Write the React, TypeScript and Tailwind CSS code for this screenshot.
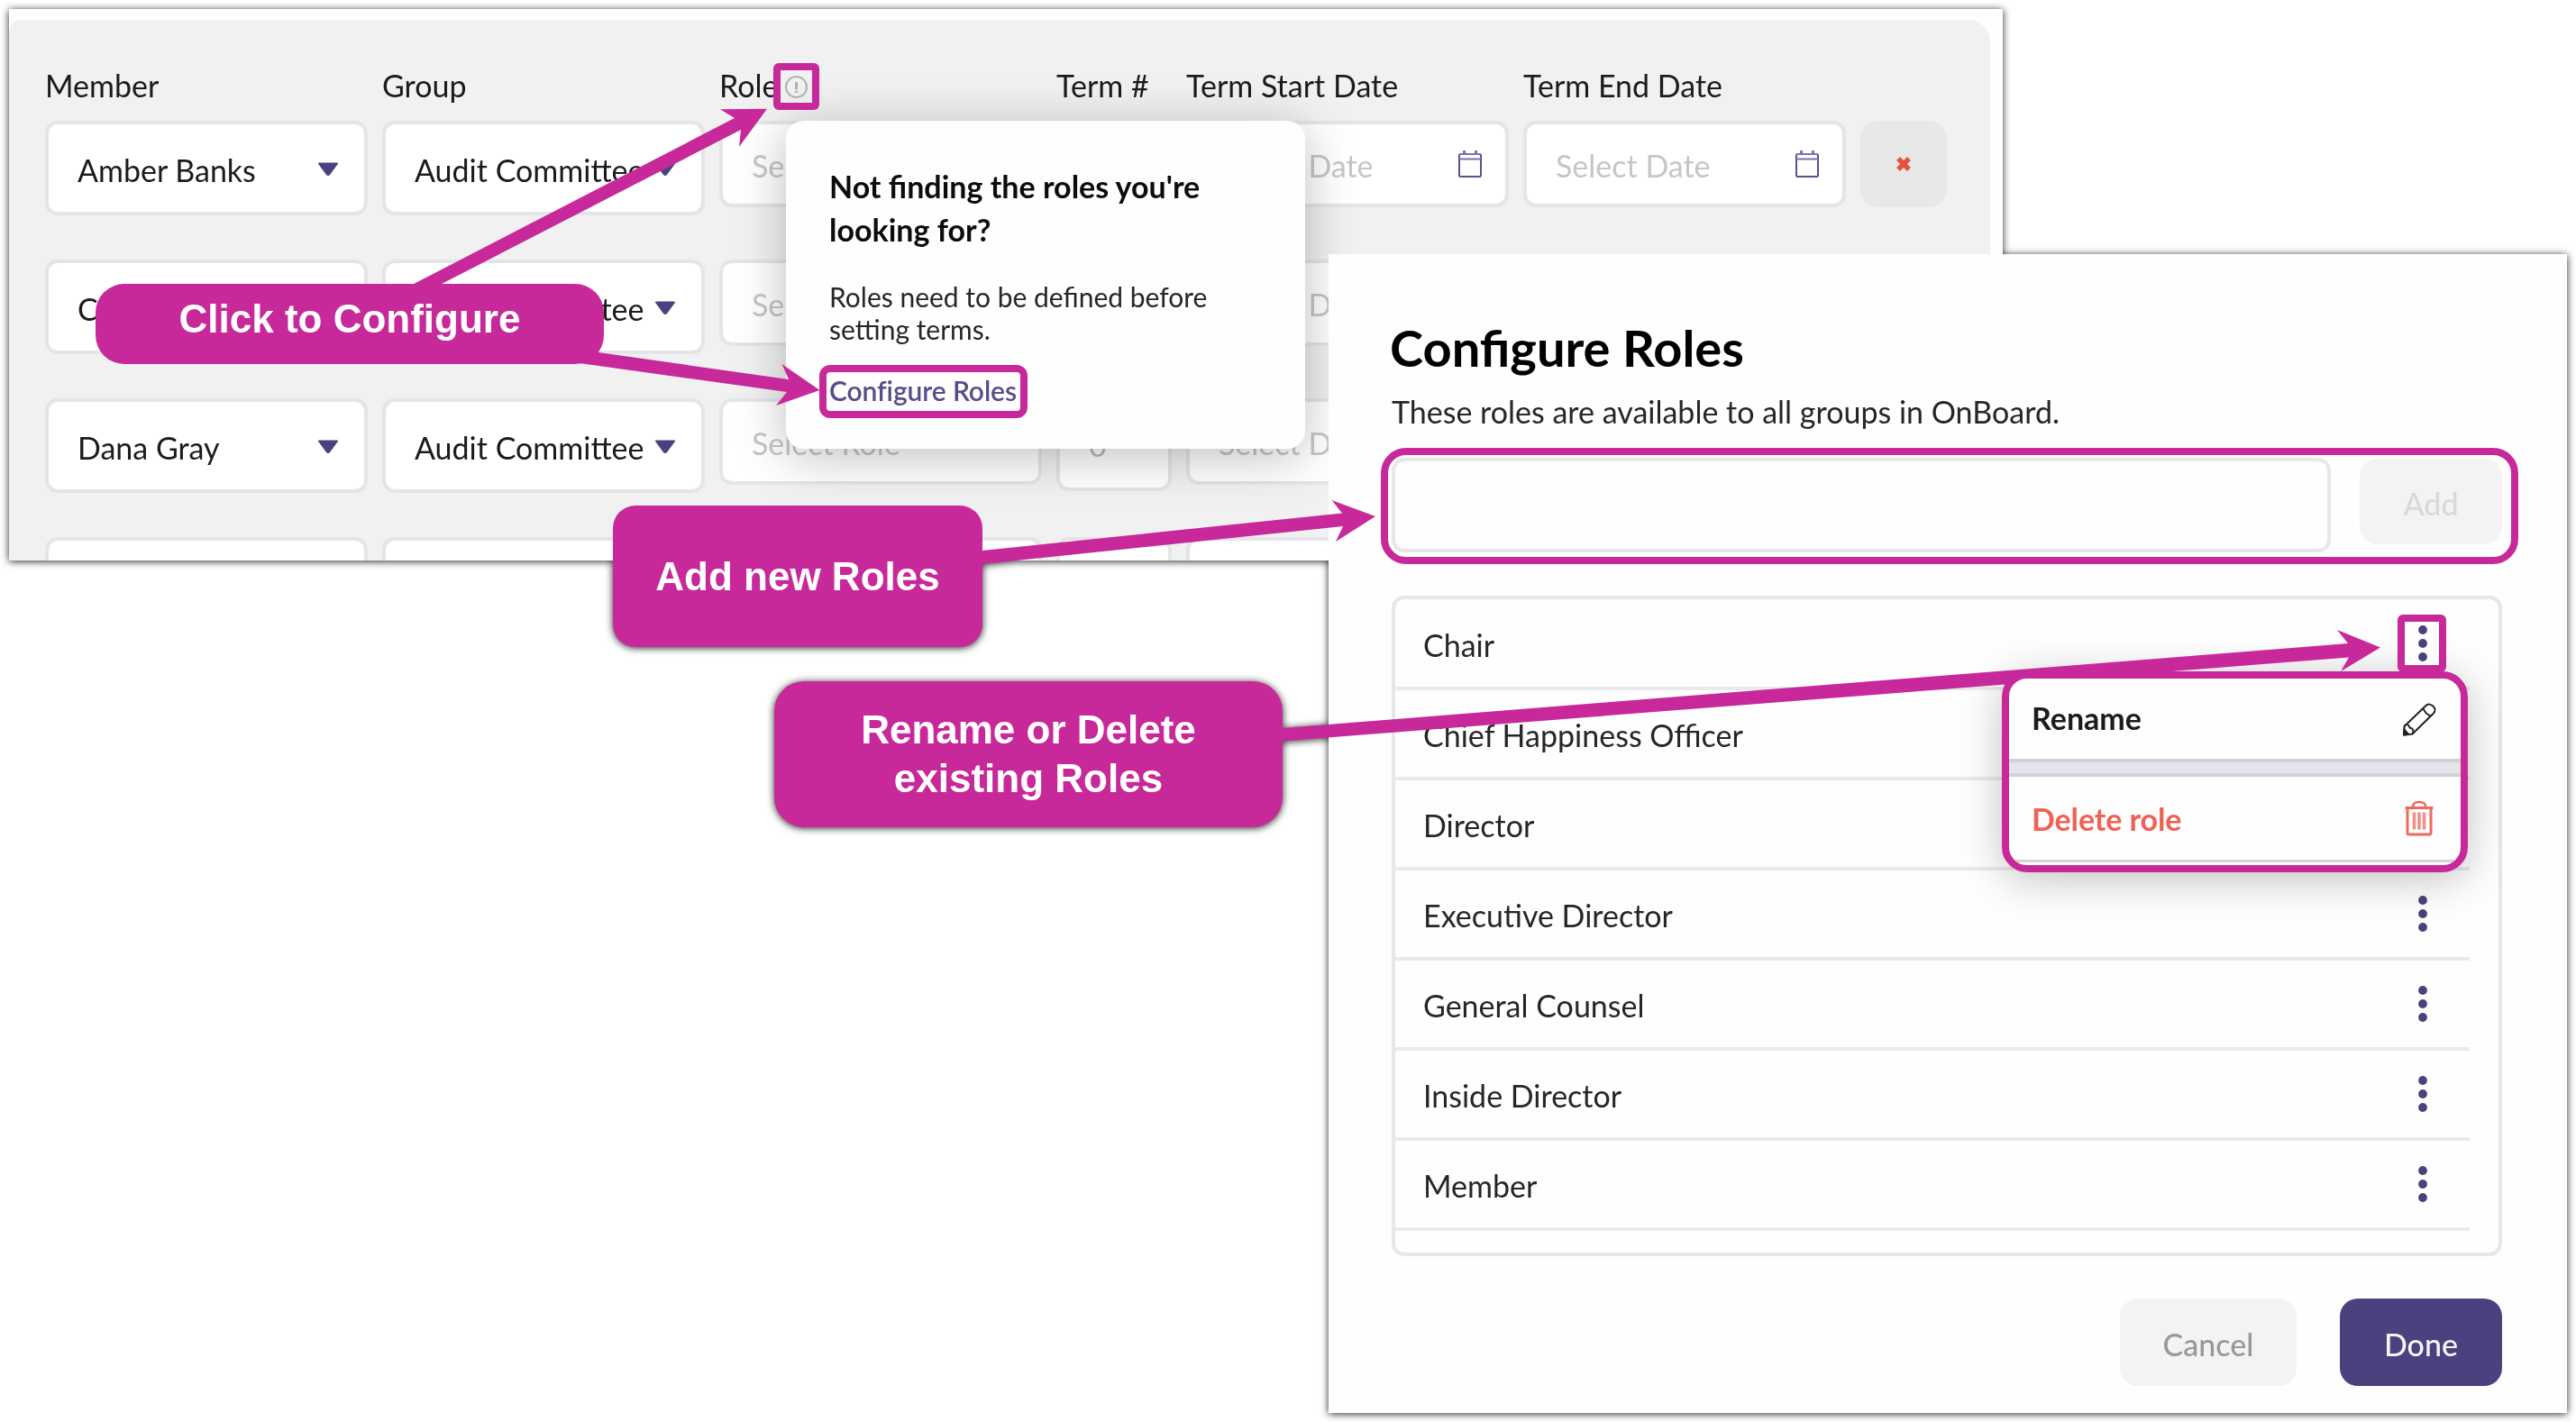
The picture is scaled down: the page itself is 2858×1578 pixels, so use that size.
import type { ReactNode } from "react";

const COLUMNS =
  "grid grid-cols-[358px_358px_358px_128px_358px_358px_96px] gap-x-4 items-start";

const members = ["Amber Banks", "C", "Dana Gray", ""];

const roles = [
  "Chair",
  "Chief Happiness Officer",
  "Director",
  "Executive Director",
  "General Counsel",
  "Inside Director",
  "Member",
];

function Caret() {
  return (
    <svg width="24" height="16" viewBox="0 0 24 16" className="shrink-0">
      <path d="M2 .5h20q1.800 0 .8 1.600L14 14q-2 2-4 0L1.200 2.100Q.2.500 2 .5Z" fill="#4c417f" />
    </svg>
  );
}

function CalendarIcon() {
  return (
    <svg width="28" height="32" viewBox="0 0 28 32" fill="none" stroke="#5b5090" className="shrink-0">
      <rect x="2" y="5" width="24" height="25" rx="1.500" strokeWidth="2" />
      <path d="M2 5h24M2 10.500h24" strokeWidth="2" stroke="#7b72a8" />
      <path d="M7.500 1v4M20.500 1v4" strokeWidth="3" stroke="#7b72a8" />
    </svg>
  );
}

function InfoIcon() {
  return (
    <svg width="26" height="26" viewBox="0 0 26 26" fill="none" stroke="#b0b0b0">
      <circle cx="12.500" cy="12.500" r="11.500" strokeWidth="2" />
      <path d="M12.500 7v8.500M12.500 17v2" strokeWidth="3" />
    </svg>
  );
}

function PencilIcon() {
  return (
    <svg
      width="38"
      height="38"
      viewBox="0 0 38 38"
      fill="none"
      stroke="#222"
      strokeWidth="2"
      strokeLinejoin="round"
    >
      <path d="M2 36.500 2.500 27 26.500 4C31-.5 40 7 35 12.500L11.500 35.500 2 36.500Z" />
      <path d="M23.500 7c1.500 4.500 4 7 8.500 8.500M2.500 27c1.500-3 5-2.500 6 1.500 4 .5 5 4 3 7" />
      <path d="M2 36.500l.5-6 4.500 5.500Z" fill="#222" />
    </svg>
  );
}

function TrashIcon() {
  return (
    <svg width="34" height="40" viewBox="0 0 34 40" fill="none" stroke="#ee6a5f">
      <path d="M1.500 8.500h31" strokeWidth="3" />
      <path d="M10 7.500c0-4 2-5.500 7-5.500s7 1.500 7 5.500" strokeWidth="2.500" />
      <path d="M4 9v27q0 2 2 2h22q2 0 2-2V9" strokeWidth="3" />
      <path d="M11.500 13.500v19M17 13.500v19M22.500 13.500v19" strokeWidth="3.500" stroke="#f08f86" />
    </svg>
  );
}

function Dots() {
  return (
    <svg width="12" height="42" viewBox="0 0 12 42" fill="#4c417f">
      <circle cx="6" cy="6" r="4.900" />
      <circle cx="6" cy="21" r="4.900" />
      <circle cx="6" cy="36" r="4.900" />
    </svg>
  );
}

function SelectBox({ label }: { label: string }) {
  return (
    <div className="flex h-[105px] items-center justify-between rounded-[14px] border-4 border-[#e4e4ea] bg-white pl-8 pr-7 text-[#1b1b1b]">
      <span className="translate-y-[2px] whitespace-nowrap">{label}</span>
      <span className="translate-y-px">
        <Caret />
      </span>
    </div>
  );
}

function DateBox({ placeholder }: { placeholder: string }) {
  return (
    <div className="flex h-24 items-center justify-between rounded-[14px] border-4 border-[#e4e4ea] bg-white pl-8 pr-[25px] text-[#c6c6c6]">
      <span className="translate-y-px whitespace-nowrap">{placeholder}</span>
      <CalendarIcon />
    </div>
  );
}

function TermsPanel() {
  return (
    <section className="absolute left-[10px] top-[10px] h-[612px] w-[2212px] overflow-hidden bg-[#fefefe] pr-[14px] pt-3">
      <div className="h-[600px] overflow-hidden rounded-tl-[14px] rounded-tr-3xl bg-[#f1f1f1] pl-10 pt-[53px]">
        <div className={`${COLUMNS} h-10 text-[#1b1b1b]`}>
          {["Member", "Group", "Role", "Term #", "Term Start Date", "Term End Date"].map((h) => (
            <span key={h} className="whitespace-nowrap leading-10">
              {h}
            </span>
          ))}
        </div>
        <div className="mt-[19px] flex flex-col">
          {members.map((name, i) => (
            <div key={i} className={`${COLUMNS} h-[154px] shrink-0`}>
              <SelectBox label={name} />
              <SelectBox label={name ? "Audit Committee" : ""} />
              <div className="flex h-24 items-center rounded-[14px] border-4 border-[#e4e4ea] bg-white pl-8 text-[#c6c6c6]">
                <span className="translate-y-px">{name ? "Select Role" : ""}</span>
              </div>
              <div className="flex h-[103px] items-center rounded-[14px] border-4 border-[#e4e4ea] bg-white pl-8 text-[#b9b9b9]">
                {name ? "0" : ""}
              </div>
              <DateBox placeholder={name ? "Select Date" : ""} />
              <DateBox placeholder={name ? "Select Date" : ""} />
              <div className="flex h-24 items-center justify-center rounded-[20px] bg-[#e8e8e8]">
                <svg width="16" height="16" viewBox="0 0 16 16" stroke="#e5503f" strokeWidth="5.500">
                  <path d="M2 2l12 12M14 2L2 14" />
                </svg>
              </div>
            </div>
          ))}
        </div>
      </div>

      <div className="absolute left-[862px] top-[124px] h-[364px] w-[576px] rounded-[20px] bg-[#fefefe] pl-12 pt-[49px] shadow-[0_8px_56px_rgba(0,0,0,0.26)]">
        <h2 className="font-bold leading-[48px] text-[#0c0c0c]">
          Not finding the roles you're
          <br />
          looking for?
        </h2>
        <p className="mt-8 text-[30px] leading-9 text-[#262626]">
          Roles need to be defined before
          <br />
          setting terms.
        </p>
        <a className="mt-8 block text-[30px] font-semibold leading-9 tracking-[-0.1px] text-[#574d88]">
          Configure Roles
        </a>
      </div>
      <div className="absolute left-[861px] top-[74px]">
        <InfoIcon />
      </div>
    </section>
  );
}

function RolesPanel() {
  return (
    <section className="absolute left-[1474px] top-[282px] flex h-[1286px] w-[1374px] flex-col bg-[#fefefe] pl-[70px] pr-[72px] pt-[74px]">
      <h1 className="-ml-0.5 text-[56px] font-bold leading-[60px] text-black">Configure Roles</h1>
      <p className="mt-[21px] leading-10 text-[#262626]">
        These roles are available to all groups in OnBoard.
      </p>
      <div className="mt-[31px] flex items-start gap-8">
        <div className="h-[105px] w-[1042px] rounded-[14px] border-4 border-[#e6e6eb]" />
        <div className="mt-px flex h-[95px] w-[158px] items-center justify-center rounded-[20px] bg-[#f3f3f3] pt-[3px] font-medium text-[#d9d9d9]">
          Add
        </div>
      </div>
      <div className="mt-[48px] h-[733px] overflow-hidden rounded-[14px] border-4 border-[#e6e6eb] pr-8 pt-px">
        {roles.map((role) => (
          <div
            key={role}
            className="flex h-[100px] items-center justify-between border-b-4 border-[#eaeaee] pl-[31px] pr-[46px] text-[#262626]"
          >
            <span className="translate-y-px">{role}</span>
            <Dots />
          </div>
        ))}
      </div>
      <div className="mt-[47px] flex justify-end gap-12 font-medium">
        <div className="flex h-[97px] w-[196px] items-center justify-center rounded-[20px] bg-[#f3f3f3] pt-[3px] text-[#98989b]">
          Cancel
        </div>
        <div className="flex h-[97px] w-[180px] items-center justify-center rounded-[20px] bg-[#4c417f] pt-[3px] text-[#f4f4f7]">
          Done
        </div>
      </div>
    </section>
  );
}

function RoleMenu() {
  return (
    <div className="absolute left-[2221px] top-[745px] flex h-[223px] w-[517px] flex-col overflow-hidden rounded-[28px] border-8 border-[#c7299a] bg-[#fefefe] font-bold">
      <div className="flex h-[89px] items-center justify-between pl-[25px] pr-[27px] text-[#1c1c1c]">
        <span className="-translate-y-px">Rename</span>
        <PencilIcon />
      </div>
      <div className="h-5 border-y-4 border-y-[#d2d2d6] bg-[#e4e4ea]" />
      <div className="flex h-[92px] items-center justify-between pl-[25px] pr-[29px] tracking-[-0.1px] text-[#f06156]">
        <span>Delete role</span>
        <TrashIcon />
      </div>
      <div className="h-[3px] bg-[#d2d2d2]" />
    </div>
  );
}

function Callout({ className, children }: { className: string; children: ReactNode }) {
  return (
    <div
      className={`absolute flex items-center justify-center bg-[#c7299a] text-center font-['Liberation_Sans',sans-serif] text-[44px] font-bold leading-[54px] text-white ${className}`}
    >
      {children}
    </div>
  );
}

function Arrows() {
  return (
    <svg
      className="absolute left-0 top-0"
      width="2858"
      height="1578"
      viewBox="0 0 2858 1578"
      fill="#c7299a"
    >
      <path d="M459 315 815 131 799 121.300 851 120.700 820 163 822 144 490 315Z" />
      <path d="M600 382 875 421 867.500 404 909.500 433 861 450 873 435 600 397Z" />
      <path d="M1080 612 1489 569.500 1477.500 555 1526 573 1482 601 1490 584 1080 627Z" />
      <path d="M1410 809 2605 714 2593 699 2641 718.500 2597 745 2606 729.500 1410 823.500Z" />
    </svg>
  );
}

export default function App() {
  return (
    <main className="relative h-[1578px] w-[2858px] overflow-hidden bg-white font-[Lato,sans-serif] text-[34px]">
      <div className="absolute inset-0 drop-shadow-[0_1px_4px_rgba(0,0,0,0.85)]">
        <TermsPanel />
        <RolesPanel />
        <div className="absolute left-[1544px] top-[660px] h-[734px] w-[1232px] overflow-hidden rounded-[14px]">
          <div className="absolute left-[677px] top-[85px] h-[223px] w-[517px] rounded-[28px] shadow-[0_8px_48px_rgba(0,0,0,0.24)]" />
        </div>
        <Arrows />
        <RoleMenu />
        <Callout className="left-[106px] top-[315px] h-[89px] w-[564px] rounded-[32px] pb-[11px]">
          Click to Configure
        </Callout>
        <Callout className="left-[680px] top-[561px] h-[157px] w-[410px] rounded-[25px]">
          Add new Roles
        </Callout>
        <Callout className="left-[859px] top-[756px] h-[162px] w-[564px] rounded-[33px]">
          Rename or Delete
          <br />
          existing Roles
        </Callout>
        <div className="absolute left-[858px] top-[70px] h-[52px] w-[51px] rounded-[6px] border-8 border-[#c7299a]" />
        <div className="absolute left-[909px] top-[405px] h-[59px] w-[231px] rounded-[12px] border-8 border-[#c7299a]" />
        <div className="absolute left-[1532px] top-[497px] h-[129px] w-[1262px] rounded-[28px] border-8 border-[#c7299a]" />
        <div className="absolute left-[2660px] top-[682px] h-[64px] w-[54px] rounded-[6px] border-8 border-[#c7299a] bg-[#fefefe]" />
        <div className="absolute left-[2682px] top-[693px]">
          <Dots />
        </div>
      </div>
    </main>
  );
}
